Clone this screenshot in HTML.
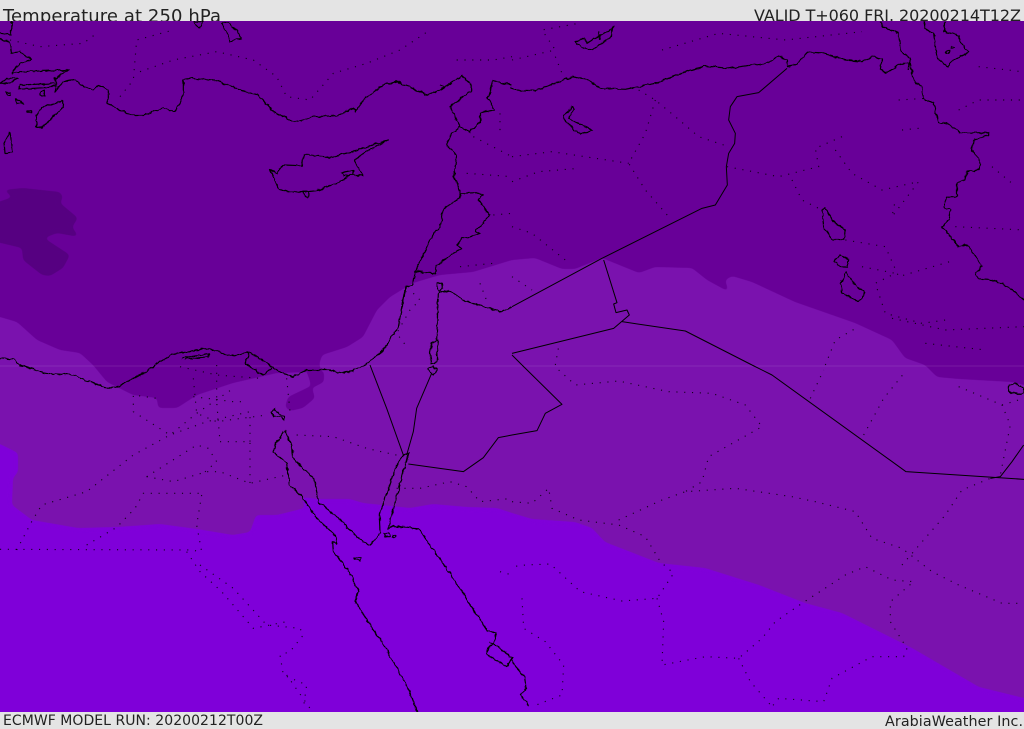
<!DOCTYPE html>
<html><head><meta charset="utf-8"><title>Temperature at 250 hPa</title>
<style>
html,body{margin:0;padding:0;background:#e4e4e4;width:1024px;height:729px;overflow:hidden}
svg{display:block}
text{font-family:"DejaVu Sans","Liberation Sans",sans-serif;fill:#222}
.c{filter:url(#w)}
.c polyline,.c polygon{fill:none;stroke:#000;stroke-width:3.6;stroke-linejoin:round}
.b polyline{fill:none;stroke:#000;stroke-width:3;stroke-linejoin:round}
.d polyline{fill:none;stroke:#000;stroke-width:3.4;stroke-dasharray:3.4 20;stroke-opacity:.85}
</style></head><body>
<svg width="1024" height="729" viewBox="0 0 1024 729" xmlns="http://www.w3.org/2000/svg">
<defs>
<filter id="w" filterUnits="userSpaceOnUse" x="-100" y="-100" width="3500" height="2500">
<feTurbulence type="fractalNoise" baseFrequency=".06" numOctaves="2" seed="4" result="n"/>
<feDisplacementMap in="SourceGraphic" in2="n" scale="11" xChannelSelector="R" yChannelSelector="G"/>
</filter>
<filter id="s" filterUnits="userSpaceOnUse" x="-40" y="-40" width="1104" height="800" color-interpolation-filters="sRGB">
<feGaussianBlur stdDeviation="2"/>
<feComponentTransfer><feFuncA type="linear" slope="7" intercept="-3"/></feComponentTransfer>
</filter>
<clipPath id="m"><rect x="0" y="21" width="1024" height="691"/></clipPath>
</defs>
<rect width="1024" height="729" fill="#e4e4e4"/>
<text x="3" y="22" font-size="18" textLength="218">Temperature at 250 hPa</text>
<text x="1021" y="21" font-size="16" text-anchor="end" textLength="267">VALID T+060 FRI. 20200214T12Z</text>
<text x="3" y="725" font-size="14" textLength="260">ECMWF MODEL RUN: 20200212T00Z</text>
<text x="885" y="726" font-size="14.3" textLength="138">ArabiaWeather Inc.</text>
<rect x="0" y="21" width="1024" height="691" fill="#680098"/>
<g clip-path="url(#m)">
<path filter="url(#s)" fill="#7a12ae" d="M-30 312 L0 317 L17 322 L37 340 L60 350 L80 353 L93 365 L107 382 L133 395 L157 398 L158 408 L177 408 L197 395 L233 383 L277 373 L309 372 L324 375 L319 365 L322 355 L347 347 L363 337 L377 310 L390 297 L413 283 L440 275 L473 272 L512 260 L535 258 L562 269 L575 269 L602 258 L639 273 L655 267 L692 268 L707 280 L729 292 L725 280 L732 276 L752 282 L795 302 L855 323 L892 340 L905 358 L925 365 L937 377 L959 379 L1012 382 L1024 385 L1054 390 L1054 740 L-30 740Z"/>
<path filter="url(#s)" fill="#680098" d="M305 368 L324 371 L324 382 L312 388 L315 398 L303 408 L290 411 L285 407 L288 397 L311 386 L309 378 Z"/>
<path filter="url(#s)" fill="#7f00d9" d="M-30 436 L0 444 L18 453 L18 472 L13 478 L12 505 L32 520 L78 528 L117 527 L160 524 L197 529 L233 535 L250 532 L256 515 L277 515 L305 508 L302 497 L317 499 L350 499 L363 503 L410 508 L433 504 L467 507 L497 508 L512 513 L532 519 L575 522 L592 528 L605 542 L659 563 L705 568 L759 585 L805 603 L842 613 L912 648 L979 687 L1024 698 L1054 704 L1054 740 L-30 740Z"/>
<path filter="url(#s)" fill="#560081" d="M3 190 L23 188 L60 192 L63 197 L60 203 L78 218 L72 227 L79 237 L57 233 L44 238 L70 255 L63 268 L50 276 L42 275 L23 260 L22 248 L-20 238 L-20 208 L13 197Z"/>
<rect x="0" y="365.5" width="1024" height="1" fill="#fff" opacity=".1"/>

<!-- Q1 -->
<g transform="scale(.33333)">
<g class="d">
<polyline points="30,120 120,140 250,130 290,100"/>
<polyline points="360,290 400,240 410,120 520,90"/>
<polyline points="420,215 520,180 650,155 760,180 830,230 860,290 930,300 1000,220 1100,190 1200,150 1290,90"/>
<polyline points="1370,180 1480,180 1536,170"/>
<polyline points="1420,410 1536,470"/>
<polyline points="1400,520 1536,530"/>
<polyline points="1480,645 1536,640"/>
<polyline points="1380,800 1480,790"/>
<polyline points="1240,880 1260,900 1230,930 1190,1000 1220,1040"/>
<polyline points="1440,850 1465,915"/>
<polyline points="1500,340 1500,400"/>
</g>
<g class="c">
<polyline points="0,100 30,105 40,70 30,65"/>
<polyline points="0,115 28,125 35,160 60,155 93,178 52,195 37,220 60,215 205,210 165,235 170,250 60,255 55,268 150,262 170,255 165,278 190,245 225,240 250,258 280,270 295,258 325,268 325,310 360,330 395,345 430,345 490,322 525,335 550,285 550,240 570,235 650,242 720,270 775,285 820,335 885,365 940,350 1010,347 1060,325 1068,335 1090,300 1150,255 1190,245 1283,285 1320,270 1385,228 1415,255 1415,272 1350,320 1380,380 1355,400 1340,435 1370,465 1362,530 1382,580 1380,595 1330,625 1320,685 1305,692 1245,815 1240,855 1218,860 1195,980 1150,1050 1095,1095 1060,1113 1020,1119"/>
<polyline points="1320,255 1335,262 1322,272"/>
<polygon points="665,70 685,68 720,105 722,115 690,125 685,105"/>
<polygon points="580,65 610,65 597,85"/>
<polygon points="0,250 20,235 55,235 25,250"/>
<polygon points="20,277 30,277 30,285 20,285"/>
<polygon points="45,298 60,300 68,310 50,310"/>
<polygon points="80,333 95,333 95,338 80,338"/>
<polygon points="120,275 133,272 133,288 120,285"/>
<polygon points="190,300 188,322 150,360 125,385 110,380 108,350 125,322 165,310"/>
<polygon points="30,397 35,430 38,455 15,458 12,430"/>
<polygon points="810,510 830,520 850,495 905,497 912,463 990,472 1040,460 1165,420 1090,460 1062,480 1090,528 1050,525 1020,545 960,570 925,575 870,578 835,565 820,530"/>
<polyline points="1025,518 1060,510 1062,525 1030,528 1025,518"/>
<polygon points="910,575 925,575 925,590 915,590"/>
<polyline points="1380,380 1410,395 1440,365 1440,338 1485,330 1465,295 1480,242 1536,255"/>
<polyline points="1382,580 1430,578 1450,585 1435,600 1470,645 1425,695 1440,702 1385,715 1370,735 1385,745 1310,795 1305,820 1245,815"/>
<polygon points="1310,850 1325,848 1328,865 1318,875 1310,865"/>
<polyline points="1315,880 1345,870 1400,905 1500,935 1536,920"/>
<polyline points="1315,880 1310,1020"/>
<polygon points="1295,1030 1315,1020 1310,1085 1295,1090 1290,1060"/>
<polyline points="0,1075 40,1078 60,1095"/>
<polyline points="465,1095 516,1062 625,1045 690,1068 750,1056 816,1101 846,1119 879,1131 921,1110 990,1110 1020,1119"/>
<polyline points="545,1075 630,1060 625,1070 555,1078"/>
<polyline points="750,1056 735,1089 774,1116 789,1125 816,1104"/>
</g></g>

<!-- Q2 -->
<g transform="translate(512 0) scale(.33333)">
<g class="d">
<polyline points="0,180 130,150 90,90 200,70"/>
<polyline points="130,170 150,220"/>
<polyline points="450,150 620,100 820,120 1050,95"/>
<polyline points="380,270 430,300 490,350 560,410 650,440"/>
<polyline points="430,300 400,400 350,490 400,570 470,650"/>
<polyline points="0,470 120,455 350,490"/>
<polyline points="0,545 80,515 200,505"/>
<polyline points="645,500 800,530 920,500 910,445 990,410"/>
<polyline points="970,450 1020,520 1110,570 1220,545 1140,650 1150,600"/>
<polyline points="840,540 870,600 930,630"/>
<polyline points="1000,720 1120,740 1160,830 1330,780"/>
<polyline points="1160,300 1240,295"/>
<polyline points="1170,390 1220,385"/>
<polyline points="1340,330 1400,300 1530,300"/>
<polyline points="1330,680 1536,690"/>
<polyline points="1050,800 1150,820 1090,850 1120,940 1230,970 1300,960"/>
<polyline points="1140,955 1300,990 1536,980"/>
<polyline points="1400,200 1530,215"/>
<polyline points="1440,500 1500,550"/>
<polyline points="0,680 60,700 160,780"/>
<polyline points="940,1095 970,1020 1040,980"/>
<polyline points="1240,1030 1420,1050"/>
<polyline points="0,830 60,870"/>
<polyline points="130,1095 140,1040"/>
</g>
<g class="c">
<polyline points="-5,260 5,270 70,272 180,230 230,240 265,265 340,268 430,250 520,215 580,198 650,205 770,188 800,168 825,180 825,200 850,195 885,158 935,160 1000,180 1050,185 1080,168 1110,180 1105,205 1120,220 1165,190 1195,190 1205,240 1230,265 1232,295 1265,310 1280,370 1305,368 1345,398 1430,398 1430,405 1385,420 1380,450 1408,490 1400,510 1365,515 1360,540 1335,550 1335,590 1305,590 1295,620 1315,630 1310,660 1290,682 1340,740 1365,735 1390,770 1410,800 1390,820 1400,838 1440,840 1490,860 1536,900"/>
<polyline points="1105,65 1110,80 1160,100 1165,150 1195,175 1190,210"/>
<polyline points="1235,65 1240,85 1265,100 1275,175 1305,198 1330,175 1370,158 1345,125 1340,105 1295,95 1300,65"/>
<polygon points="1305,150 1313,150 1310,160 1303,158"/>
<polygon points="1318,138 1330,142 1325,146 1316,143"/>
<polygon points="930,630 940,625 960,660 1000,690 995,720 965,720 935,680"/>
<polygon points="965,785 985,765 1010,780 1005,800 990,803"/>
<polygon points="1003,815 1020,845 1060,878 1040,905 990,880 985,850"/>
<polygon points="155,350 180,320 185,330 170,355 240,390 205,402 165,370"/>
<polygon points="192,125 220,115 225,130 300,85 305,80 295,112 240,150 205,140"/>
<polyline points="258,95 265,118"/>
</g>
<g class="b">
<polyline points="825,205 740,278 675,290 655,320 650,360 670,400 668,430 650,460 643,500 646,555 610,615 570,625 270,775 0,920"/>
<polyline points="275,780 315,908 305,912 312,938 345,930 352,945 305,985 0,1060"/>
<polyline points="330,965 520,993 720,1095"/>
<polyline points="0,1065 30,1095"/>
</g></g>

<!-- Q3 -->
<g transform="translate(0 365) scale(.33333)">
<g class="d">
<polyline points="0,553 570,555 605,560"/>
<polyline points="50,555 95,470 125,420 260,380 400,270 510,210 590,145 700,70"/>
<polyline points="260,540 350,487 405,430 430,385 600,385"/>
<polyline points="605,390 590,480 605,560"/>
<polyline points="440,335 520,350 620,320 660,320 750,355 860,330"/>
<polyline points="440,335 590,240 625,250 650,290 610,325"/>
<polyline points="660,230 750,230 750,355"/>
<polyline points="750,230 750,140 620,170 510,210 400,140 400,90 470,100"/>
<polyline points="580,40 590,145 650,170 800,150"/>
<polyline points="650,0 650,110 660,230"/>
<polyline points="540,5 650,30 780,40"/>
<polyline points="580,95 700,110 735,110"/>
<polyline points="890,210 1000,215 1100,250 1210,275"/>
<polyline points="1190,370 1260,370 1350,350 1400,365 1440,410 1536,400"/>
<polyline points="600,600 700,670 800,780 900,790 910,810 870,860 840,870 850,930 920,960 910,1030"/>
<polyline points="560,560 600,620 665,680 760,790 860,770"/>
<polyline points="860,930 930,1030"/>
<polyline points="860,40 870,140"/>
<polyline points="1500,620 1536,630"/>
</g>
<g class="c">
<polyline points="60,0 135,25 220,30 315,68 345,68 430,25 465,0"/>
<polygon points="815,140 825,130 840,150 855,158 852,165 838,155 820,155"/>
<polyline points="850,200 825,240 822,262 860,295 870,360 905,395 950,460 1005,510 1012,535 998,530 1000,560 1050,625 1075,680 1065,710 1160,855 1225,970 1252,1040"/>
<polyline points="855,195 875,240 880,280 945,345 955,410 1010,455 1080,525 1110,540 1140,505 1138,450 1190,300 1210,270 1225,265 1165,490 1180,483 1255,490 1300,555 1350,625 1460,795 1490,805 1480,835 1465,850 1460,868 1520,905 1536,880 1500,850 1468,832"/>
<polygon points="1285,10 1300,3 1310,15 1300,30 1290,25"/>
<polygon points="1152,505 1165,505 1170,515 1155,515"/>
<polygon points="1178,510 1188,512 1185,518 1178,516"/>
<polygon points="1062,577 1080,578 1082,587 1065,582"/>
</g>
<g class="b">
<polyline points="1110,0 1160,130 1210,270"/>
<polyline points="1295,25 1250,130 1240,200 1220,270"/>
<polyline points="1225,297 1390,320 1450,278 1495,218 1536,210"/>
</g></g>

<!-- Q4 -->
<g transform="translate(512 365) scale(.33333)">
<g class="d">
<polyline points="140,15 190,60 320,48 470,80 600,85 700,120 750,185 590,275 570,350 520,380 670,370 840,395 910,410 1030,440 1080,520 1170,550 1260,620 1340,660 1470,715 1536,715"/>
<polyline points="0,410 60,415 110,370 120,430 200,465 320,480 400,515 445,590 485,625 435,700 330,708 205,680 115,597 40,600 0,605"/>
<polyline points="320,465 450,405 520,380"/>
<polyline points="435,700 455,770 450,900 580,875 680,880 750,820 790,770 870,715 1000,630 1060,605 1140,645 1205,650 1135,710 1135,770 1185,850 1175,875 1080,875 960,940 935,1010 800,1000 780,1025"/>
<polyline points="680,880 715,950 780,1025"/>
<polyline points="1170,600 1300,450 1350,375 1435,340"/>
<polyline points="1055,210 1115,100 1180,20"/>
<polyline points="895,100 935,15"/>
<polyline points="1340,65 1470,120 1495,180 1465,330"/>
<polyline points="30,700 35,790 100,830 155,900 150,990 60,1025"/>
<polyline points="1470,120 1536,100"/>
</g>
<g class="b">
<polyline points="30,0 150,118 100,145 75,197 0,210"/>
<polyline points="720,0 780,30 1182,320 1536,343"/>
<polyline points="1535,240 1500,290 1465,335 1435,340"/>
</g>
<g class="c">
<polyline points="0,885 10,905 38,935 42,970 25,990 50,1022"/>
<polygon points="1490,62 1510,55 1536,70 1536,85 1500,85 1488,75"/>
</g></g>
</g>
</svg>
</body></html>
